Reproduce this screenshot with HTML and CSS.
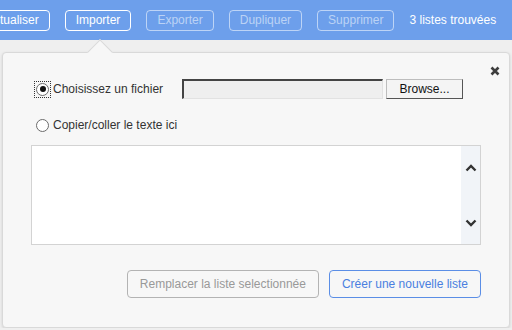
FILE: index.html
```html
<!DOCTYPE html>
<html lang="fr">
<head>
  <meta charset="UTF-8" />
  <title>Importer une liste</title>
  <link rel="stylesheet" href="styles.css">
</head>
<body>

  <!-- Barre d'outils -->
  <div class="toolbar">
    <button class="tool-btn first">Actualiser</button>
    <button class="tool-btn">Importer</button>
    <button class="tool-btn disabled">Exporter</button>
    <button class="tool-btn disabled">Dupliquer</button>
    <button class="tool-btn disabled">Supprimer</button>
    <span class="count">3 listes trouvées</span>
  </div>

  <!-- Panneau d'import -->
  <div class="panel">
    <span class="arrow"></span>
    <span class="close">
      <svg width="10" height="10" viewBox="0 0 10 10"><path d="M1.5 1.5 L8.5 8.5 M8.5 1.5 L1.5 8.5" stroke="#3d3d3d" stroke-width="2.6" stroke-linecap="butt"/></svg>
    </span>

    <div class="row">
      <label class="choice">
        <span class="focus"><span class="radio"><span class="dot"></span></span></span>
        Choisissez un fichier
      </label>
      <div class="file-input">
        <span class="file-name"></span>
        <span class="browse">Browse...</span>
      </div>
    </div>

    <div class="row second">
      <label class="choice">
        <span class="focus blank"><span class="radio"></span></span>
        Copier/coller le texte ici
      </label>
    </div>

    <div class="textarea">
      <div class="text-body"></div>
      <div class="scrollbar">
        <svg width="12" height="8" viewBox="0 0 12 8"><polyline points="1.5,6.5 6,2 10.5,6.5" fill="none" stroke="#333" stroke-width="2.4"/></svg>
        <svg width="12" height="8" viewBox="0 0 12 8"><polyline points="1.5,1.5 6,6 10.5,1.5" fill="none" stroke="#333" stroke-width="2.4"/></svg>
      </div>
    </div>

    <div class="actions">
      <button class="action-btn muted">Remplacer la liste selectionnée</button>
      <button class="action-btn primary">Créer une nouvelle liste</button>
    </div>
  </div>

</body>
</html>
```

FILE: styles.css
```css
body {
  margin: 0;
  padding: 0;
  font-family: 'Liberation Sans', Arial, sans-serif;
  font-size: 12px;
  background: #efefef;
  color: #333;
  overflow: hidden;
}

/* Barre d'outils */
.toolbar {
  height: 40px;
  background: #6d9feb;
  display: flex;
  align-items: center;
  gap: 15px;
  white-space: nowrap;
}

.tool-btn {
  font-family: inherit;
  font-size: 12px;
  height: 21px;
  padding: 0 10px;
  background: transparent;
  color: #fff;
  border: 1px solid #fff;
  border-radius: 4px;
  line-height: 19px;
}

.tool-btn.first {
  margin-left: -25px;
}

.tool-btn.disabled {
  color: rgba(255,255,255,0.55);
  border-color: rgba(255,255,255,0.55);
}

.count {
  color: #fff;
}

/* Panneau */
.panel {
  position: relative;
  margin: 12px 2px 0;
  height: 276px;
  background: #f7f7f7;
  border: 1px solid #d9d9d9;
  border-radius: 4px;
  box-shadow: 0 1px 3px rgba(0,0,0,0.12);
  padding: 26px 28px 0 28px;
  box-sizing: border-box;
}

.arrow {
  position: absolute;
  top: -10px;
  left: 88px;
  width: 18px;
  height: 18px;
  background: #f7f7f7;
  border-left: 1px solid #d9d9d9;
  border-top: 1px solid #d9d9d9;
  box-sizing: border-box;
  transform: rotate(45deg);
}

.close {
  position: absolute;
  top: 13px;
  right: 9px;
  line-height: 0;
}

.row {
  display: flex;
  align-items: center;
  height: 20px;
}

.row.second {
  margin-top: 18px;
  height: 16px;
}

.choice {
  display: flex;
  align-items: center;
  width: 151px;
  flex: 0 0 151px;
  gap: 2px;
  white-space: nowrap;
}

.focus {
  flex: 0 0 auto;
  margin-left: 3px;
  padding: 1px;
  border: 1px dotted #333;
  line-height: 0;
}

.focus.blank {
  border-color: transparent;
}

.radio {
  width: 11px;
  height: 11px;
  border: 1px solid #6b6b6b;
  border-radius: 50%;
  background: #fff;
  display: inline-flex;
  align-items: center;
  justify-content: center;
}

.radio .dot {
  width: 6px;
  height: 6px;
  border-radius: 50%;
  background: #111;
}

.file-input {
  display: flex;
  align-items: center;
  gap: 3px;
}

.file-name {
  width: 198px;
  height: 17px;
  background: #efefef;
  border-top: 2px solid #444;
  border-left: 2px solid #444;
  border-right: 1px solid #e2e2e2;
  border-bottom: 1px solid #e2e2e2;
}

.browse {
  width: 75px;
  height: 18px;
  line-height: 18px;
  text-align: center;
  background: #f4f4f4;
  border: 1px solid #bdbdbd;
  border-right-color: #555;
  border-bottom-color: #555;
  color: #111;
}

/* Zone de texte */
.textarea {
  margin-top: 12px;
  height: 98px;
  border: 1px solid #d3d3d3;
  background: #fff;
  display: flex;
}

.text-body {
  flex: 1;
}

.scrollbar {
  width: 19px;
  background: #f1f4f8;
  display: flex;
  flex-direction: column;
  align-items: center;
  justify-content: space-between;
  padding: 18px 0 17px;
  box-sizing: border-box;
}

/* Boutons d'action */
.actions {
  margin-top: 25px;
  display: flex;
  justify-content: flex-end;
  gap: 10px;
}

.action-btn {
  font-family: inherit;
  font-size: 12px;
  height: 28px;
  padding: 0 12px;
  background: transparent;
  border-radius: 4px;
}

.action-btn.muted {
  color: #999;
  border: 1px solid #b3b3b3;
}

.action-btn.primary {
  color: #4a7fe0;
  border: 1px solid #5b8ee6;
}
```
